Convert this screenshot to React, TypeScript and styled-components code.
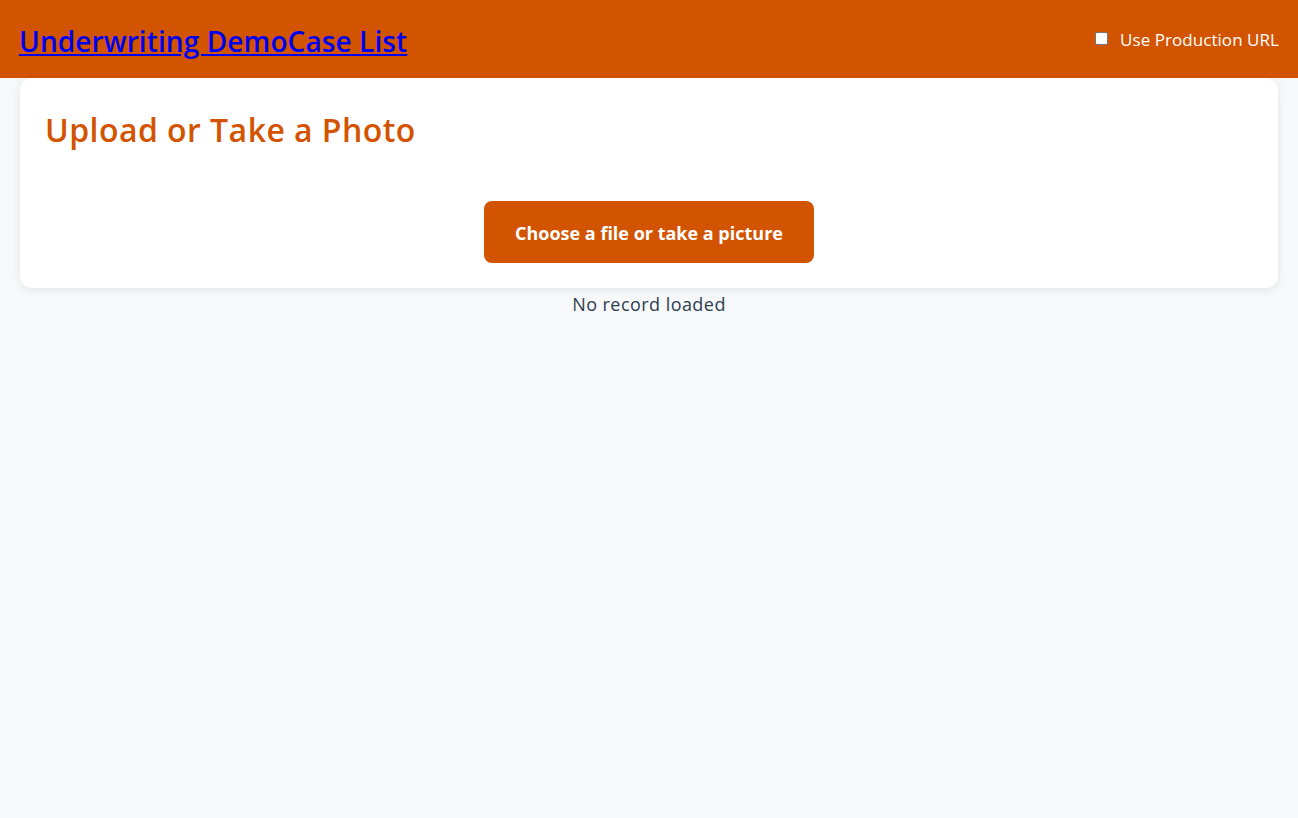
import React from "react";
import styled, { createGlobalStyle } from "styled-components";

const Global = createGlobalStyle`
  html, body { margin: 0; padding: 0; }
  body {
    background: #f7f8fa;
    font-family: "Open Sans", "Noto Sans", sans-serif;
    color: #2c3e50;
  }
`;

const Header = styled.header`
  height: 78px;
  background: #d35400;
  display: flex;
  align-items: center;
  justify-content: space-between;
  padding: 0 19px;
  box-sizing: border-box;
`;

const TitleLink = styled.a`
  color: #0000ee;
  text-decoration: underline;
  font-size: 28px;
  font-weight: 600;
  letter-spacing: 0.1px;
  margin-top: 3px;
`;

const ToggleLabel = styled.label`
  display: flex;
  align-items: center;
  gap: 12px;
  color: #ffffff;
  font-size: 17px;
  letter-spacing: 0.05px;
`;

const Checkbox = styled.input`
  appearance: none;
  width: 13px;
  height: 13px;
  margin: 0 0 2px;
  background: #ffffff;
  border: 1px solid #767676;
  border-radius: 2px;
  box-sizing: border-box;
`;

const Main = styled.main`
  padding: 0 20px;
`;

const Card = styled.section`
  background: #ffffff;
  border-radius: 12px;
  box-shadow: 0 2px 10px rgba(0, 0, 0, 0.08);
  padding: 28px 25px 25px;
  display: flex;
  flex-direction: column;
`;

const CardTitle = styled.h2`
  margin: 0;
  color: #d35400;
  font-size: 32px;
  font-weight: 600;
  line-height: 48px;
  letter-spacing: 0.45px;
`;

const ButtonRow = styled.div`
  display: flex;
  justify-content: center;
  margin-top: 47px;
`;

const UploadButton = styled.button`
  width: 330px;
  height: 62px;
  border: none;
  border-radius: 8px;
  background: #d35400;
  color: #ffffff;
  font-family: inherit;
  font-size: 18px;
  font-weight: 700;
  cursor: pointer;
  padding-top: 2px;
`;

const Status = styled.p`
  margin: 4px 0 0;
  text-align: center;
  font-size: 18px;
  line-height: 24px;
  letter-spacing: 0.45px;
  color: #2c3e50;
`;

export default function App() {
  return (
    <>
      <Global />
      <Header>
        <TitleLink href="#">Underwriting DemoCase List</TitleLink>
        <ToggleLabel>
          <Checkbox type="checkbox" />
          Use Production URL
        </ToggleLabel>
      </Header>
      <Main>
        <Card>
          <CardTitle>Upload or Take a Photo</CardTitle>
          <ButtonRow>
            <UploadButton>Choose a file or take a picture</UploadButton>
          </ButtonRow>
        </Card>
        <Status>No record loaded</Status>
      </Main>
    </>
  );
}
